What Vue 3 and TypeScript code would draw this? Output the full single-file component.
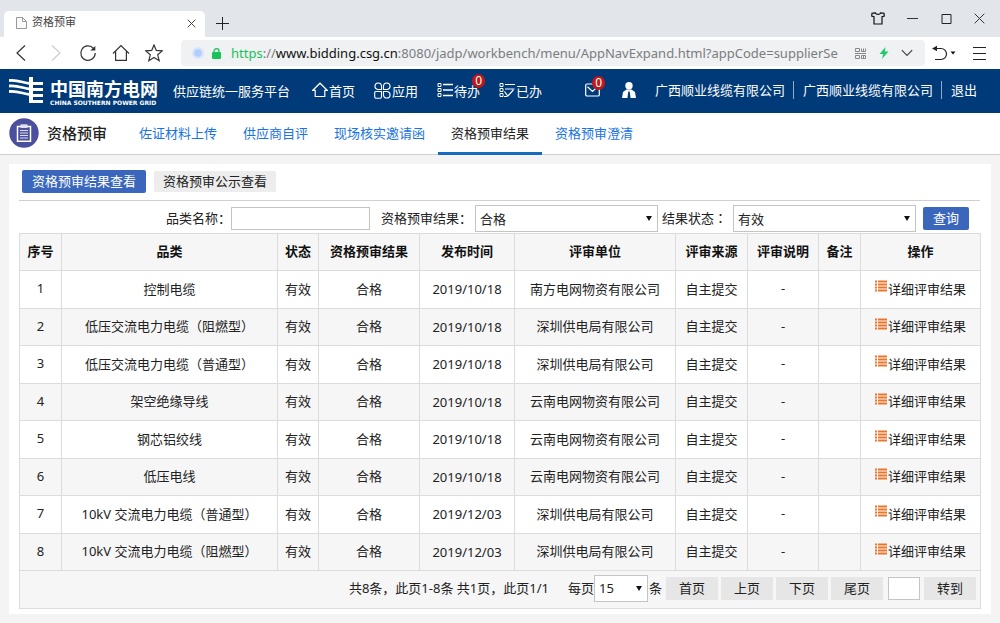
<script setup lang="ts">
import { ref } from 'vue'

interface Row {
  category: string
  date: string
  unit: string
}

const rows: Row[] = [
  { category: '控制电缆', date: '2019/10/18', unit: '南方电网物资有限公司' },
  { category: '低压交流电力电缆（阻燃型）', date: '2019/10/18', unit: '深圳供电局有限公司' },
  { category: '低压交流电力电缆（普通型）', date: '2019/10/18', unit: '深圳供电局有限公司' },
  { category: '架空绝缘导线', date: '2019/10/18', unit: '云南电网物资有限公司' },
  { category: '钢芯铝绞线', date: '2019/10/18', unit: '云南电网物资有限公司' },
  { category: '低压电线', date: '2019/10/18', unit: '云南电网物资有限公司' },
  { category: '10kV 交流电力电缆（普通型）', date: '2019/12/03', unit: '深圳供电局有限公司' },
  { category: '10kV 交流电力电缆（阻燃型）', date: '2019/12/03', unit: '深圳供电局有限公司' },
]

const headers = ['序号', '品类', '状态', '资格预审结果', '发布时间', '评审单位', '评审来源', '评审说明', '备注', '操作']
const tabs = ['佐证材料上传', '供应商自评', '现场核实邀请函', '资格预审结果', '资格预审澄清']
const pagers = ['首页', '上页', '下页', '尾页']

const activeTab = ref('资格预审结果')
const keyword = ref('')
const result = ref('合格')
const state = ref('有效')
const pageSize = ref('15')
const target = ref('')
</script>

<template>
  <div class="page">
    <div class="tabbar">
      <div class="tab">
        <svg width="11" height="12" viewBox="0 0 11 12" fill="#fafafa" stroke="#999"><path d="M.5.5h6l4 4v7H.5zM6.500.5v4h4" /></svg>
        <span class="tab-title">资格预审</span>
        <button class="icon-btn" aria-label="关闭标签">
          <svg width="9" height="9" viewBox="0 0 9 9" fill="none" stroke="#444"><path d="M.7.7l7.600 7.600M8.300.7L.7 8.300" /></svg>
        </button>
      </div>
      <button class="icon-btn plus" aria-label="新建标签">
        <svg width="13" height="13" viewBox="0 0 13 13" fill="none" stroke="#222"><path d="M6.500 0v13M0 6.500h13" /></svg>
      </button>
      <div class="win">
        <button class="icon-btn" aria-label="皮肤">
          <svg width="14" height="13" viewBox="0 0 14 13" fill="none" stroke="#111" stroke-width="1.200"><path d="M4.500.8L1 1.200.7 4l2.300.8V12h8V4.800l2.300-.8-.3-2.800L9.500.8C9 3 5 3 4.500.8z" /></svg>
        </button>
        <button class="icon-btn" aria-label="最小化">
          <svg width="12" height="12" viewBox="0 0 12 12" stroke="#333"><path d="M0 5.500h11" /></svg>
        </button>
        <button class="icon-btn" aria-label="最大化">
          <svg width="11" height="11" viewBox="0 0 11 11" fill="none" stroke="#222"><path d="M1 1.500h9v9H1z" /></svg>
        </button>
        <button class="icon-btn" aria-label="关闭">
          <svg width="11" height="11" viewBox="0 0 11 11" fill="none" stroke="#333"><path d="M.7.7l9.600 9.600M10.300.7L.7 10.300" /></svg>
        </button>
      </div>
    </div>

    <div class="toolbar">
      <div class="tools">
        <button class="icon-btn" aria-label="后退">
          <svg width="18" height="18" viewBox="0 0 18 18" fill="none" stroke="#333" stroke-width="1.200"><path d="M12 1.500L4 9l8 7.500" /></svg>
        </button>
        <button class="icon-btn" aria-label="前进">
          <svg width="18" height="18" viewBox="0 0 18 18" fill="none" stroke="#ccc" stroke-width="1.200"><path d="M6 1.500L14 9l-8 7.500" /></svg>
        </button>
        <button class="icon-btn" aria-label="刷新">
          <svg width="18" height="18" viewBox="0 0 18 18" fill="none" stroke="#333" stroke-width="1.200"><path d="M14.500 4.500A7.200 7.200 0 1 0 16.200 9" /><path d="M16.300 2v4.500h-5z" fill="#333" stroke="none" /></svg>
        </button>
        <button class="icon-btn" aria-label="主页">
          <svg width="18" height="18" viewBox="0 0 18 18" fill="none" stroke="#333" stroke-width="1.200"><path d="M1 9.500L9 1.500l8 8M3.600 7.500v8.800h10.800V7.500" /></svg>
        </button>
        <button class="icon-btn" aria-label="收藏">
          <svg width="18" height="18" viewBox="0 0 18 18" fill="none" stroke="#333" stroke-width="1.200"><path d="M9 1l2.300 5.400 6 .5-4.600 3.900 1.500 5.900L9 13.500l-5.200 3.200 1.500-5.900L.7 6.900l6-.5z" /></svg>
        </button>
      </div>
      <div class="address">
        <svg width="12" height="12" viewBox="0 0 12 12"><circle cx="6" cy="6" r="6" fill="#d8e5fc" /><circle cx="6" cy="6" r="3.800" fill="#b3cefa" /></svg>
        <svg class="lock" width="9" height="11" viewBox="0 0 9 11"><path d="M2 5V3.200a2.500 2.500 0 0 1 5 0V5" fill="none" stroke="#18c35a" stroke-width="1.300" /><rect y="4" width="9" height="7" rx="1" fill="#18c35a" /></svg>
        <div class="url"><span class="secure">https</span>://<span class="host">www.bidding.csg.cn</span>:8080/jadp/workbench/menu/AppNavExpand.html?appCode=supplierSe</div>
        <svg class="qr" width="11" height="11" viewBox="0 0 11 11" fill="none" stroke="#888"><path d="M.5.5h4v3h-4zM6.500.5v3h4v-3M8.500.5v3M0 5.500h11M.5 7.500h4v3h-4zM6.500 7.500h4v3h-4zM8.500 7.500v3" /></svg>
        <svg class="bolt" width="10" height="12" viewBox="0 0 10 12"><path d="M6.500 0L.5 7h3.700L3 12l6.500-7.400H5.800z" fill="#1fcb6b" /></svg>
        <svg width="12" height="8" viewBox="0 0 12 8" fill="none" stroke="#444" stroke-width="1.200"><path d="M.8 1.200L6 6.400l5.200-5.200" /></svg>
      </div>
      <button class="icon-btn undo" aria-label="恢复">
        <svg width="24" height="16" viewBox="0 0 24 16" fill="none" stroke="#222" stroke-width="1.200"><path d="M2 3.500h7a5 5 0 0 1 0 11H3" /><path d="M0 3.500L5 .8v5.400z" fill="#222" stroke="none" /><path d="M18.500 6.500h5L21 9.500z" fill="#111" stroke="none" /></svg>
      </button>
      <button class="icon-btn" aria-label="菜单">
        <svg width="13" height="13" viewBox="0 0 13 13" stroke="#222"><path d="M0 .5h13M0 6.500h13M0 12.500h13" /></svg>
      </button>
    </div>

    <header class="nav">
      <svg class="logo" width="34" height="27" viewBox="0 0 34 27" fill="none" stroke="#fff">
        <path d="M0 3.500c9-1 14 2.500 21 3M0 9c9-1 14 2.500 21 3M0 14.500c9-1 14 2.500 21 3" stroke-width="2.800" />
        <path d="M22 0v25.500" stroke-width="4" />
        <path d="M24 6.500h10M24 12.500h10M24 18.500h10M20 24.500h14" stroke-width="2.800" />
      </svg>
      <div class="brand">
        <strong>中国南方电网</strong>
        <small>CHINA SOUTHERN POWER GRID</small>
      </div>
      <span class="platform">供应链统一服务平台</span>
      <nav class="menu">
        <a href="#">
          <svg width="16" height="16" viewBox="0 0 16 16" fill="none" stroke="#fff" stroke-width="1.200"><path d="M.8 8.300L8 1.200l7.200 7.100H12.800v6.200H3.200V8.300z" /></svg>首页</a>
        <a href="#">
          <svg width="17" height="17" viewBox="0 0 17 17" fill="none" stroke="#fff" stroke-width="1.100"><path d="M7.500 7.500H3.800a3.300 3.300 0 1 1 3.700-3.700zM9.500 7.500V3.800a3.300 3.300 0 1 1 3.700 3.700zM7.500 9.500H1.700a1 1 0 0 0-1 1v4.200a1.600 1.600 0 0 0 1.600 1.600H5.900a1.600 1.600 0 0 0 1.600-1.600zM9.500 9.500h3.700a3.300 3.300 0 1 1-3.700 3.700z" /></svg>应用</a>
        <a href="#">
          <svg width="16" height="16" viewBox="0 0 16 16" fill="none" stroke="#fff"><path d="M1 1.500h3v3H1zM1 6.500h3v3H1zM1 11.500h3v3H1z" /><path d="M6 2.500h10M6 8h10M6 13.500h10" stroke-width="1.300" /></svg>待办<span class="badge">0</span></a>
        <a href="#">
          <svg width="16" height="16" viewBox="0 0 16 16" fill="none" stroke="#fff"><path d="M1 1.500h3v3H1zM1 6.500h3v3H1zM1 11.500h3v3H1z" /><path d="M6 2.500h10M6 7h9.500M5.500 9.500l3.300 4.500 5.500-6M5 14.500h3" stroke-width="1.200" /></svg>已办</a>
      </nav>
      <a class="mail" href="#" aria-label="消息">
        <svg width="15" height="14" viewBox="0 0 15 14" fill="none" stroke="#fff" stroke-width="1.200"><path d="M9 1H2a1.300 1.300 0 0 0-1.300 1.300v9.400A1.300 1.300 0 0 0 2 13h11a1.300 1.300 0 0 0 1.300-1.300V5M2.500 3.800L7.500 8.500l5-4.700" /></svg>
        <span class="badge">0</span>
      </a>
      <svg class="user" width="14" height="16" viewBox="0 0 14 16" fill="#fff"><circle cx="7" cy="3.700" r="3.700" /><path d="M4.500 7.500h5L13 10l1 6H8.600L7.700 9.500H6.300L5.400 16H0l1-6z" /></svg>
      <div class="account">
        <a href="#">广西顺业线缆有限公司</a>
        <a href="#">广西顺业线缆有限公司</a>
        <a href="#">退出</a>
      </div>
    </header>

    <div class="subnav">
      <svg width="30" height="30" viewBox="0 0 30 30"><circle cx="15" cy="15" r="14.700" fill="#4b4f9c" /><path d="M8.500 8.500h13v14.700h-13z" fill="none" stroke="#fff" stroke-width="1.500" /><path d="M11.500 6.300h7V10h-7z" fill="#dfe1f2" /><path d="M11 12.500h8M11 15h8M11 17.500h8M11 20h8" stroke="#dfe1f2" stroke-width="1.200" /></svg>
      <h1>资格预审</h1>
      <nav class="tabs">
        <a v-for="t in tabs" :key="t" href="#" :class="{ active: t === activeTab }" @click.prevent="activeTab = t">{{ t }}</a>
      </nav>
    </div>

    <main class="panel">
      <div class="switches">
        <button class="primary">资格预审结果查看</button>
        <button class="plain">资格预审公示查看</button>
      </div>
      <form class="search" @submit.prevent>
        <label for="keyword">品类名称：</label>
        <input id="keyword" v-model="keyword" type="text" />
        <label for="result" class="result-label">资格预审结果：</label>
        <span class="select"><select id="result" v-model="result"><option>合格</option><option>不合格</option></select></span>
        <label for="state" class="state-label">结果状态：</label>
        <span class="select"><select id="state" v-model="state"><option>有效</option><option>无效</option></select></span>
        <button class="primary" type="submit">查询</button>
      </form>
      <table>
        <colgroup>
          <col class="c-no" /><col class="c-cat" /><col class="c-state" /><col class="c-res" /><col class="c-date" />
          <col class="c-unit" /><col class="c-src" /><col class="c-note" /><col class="c-no" /><col class="c-op" />
        </colgroup>
        <thead>
          <tr><th v-for="h in headers" :key="h" scope="col">{{ h }}</th></tr>
        </thead>
        <tbody>
          <tr v-for="(r, i) in rows" :key="i">
            <td>{{ i + 1 }}</td>
            <td>{{ r.category }}</td>
            <td>有效</td>
            <td>合格</td>
            <td class="date">{{ r.date }}</td>
            <td>{{ r.unit }}</td>
            <td>自主提交</td>
            <td>-</td>
            <td></td>
            <td>
              <a class="detail" href="#"><svg width="12" height="12" viewBox="0 0 12 12" stroke="#e8762c" stroke-width="1.800"><path d="M0 1.500h2M3 1.500h9M0 4.500h2M3 4.500h9M0 7.500h2M3 7.500h9M0 10.500h2M3 10.500h9" /></svg>详细评审结果</a>
            </td>
          </tr>
        </tbody>
        <tfoot>
          <tr>
            <td colspan="10">
              <div class="pager">
                <span class="total">共8条，此页1-8条 共1页，此页1/1</span>
                <label for="size">每页</label>
                <span class="select small"><select id="size" v-model="pageSize"><option>15</option><option>30</option></select></span>
                <span class="unit">条</span>
                <button v-for="p in pagers" :key="p">{{ p }}</button>
                <input v-model="target" type="text" aria-label="页码" />
                <button>转到</button>
              </div>
            </td>
          </tr>
        </tfoot>
      </table>
    </main>
  </div>
</template>

<style>
body {
  margin: 0;
  background: #f4f4f4;
}
</style>

<style scoped>
.page,
.page button,
.page input,
.page select {
  font-family: "Noto Sans", "Noto Sans CJK SC", sans-serif;
  font-size: 13px;
  color: #222;
}
.page * {
  box-sizing: border-box;
}
.page a {
  text-decoration: none;
}
svg {
  flex: none;
}
button {
  border: 0;
  padding: 0;
  white-space: nowrap;
}
.icon-btn {
  display: flex;
  flex: none;
  background: none;
}

.tabbar {
  display: flex;
  align-items: center;
  height: 37px;
  background: #e2e5ea;
}
.tab {
  display: flex;
  align-items: center;
  align-self: flex-end;
  width: 201px;
  height: 26px;
  margin-left: 4px;
  padding: 0 9px 2px 12px;
  border-radius: 5px 5px 0 0;
  background: #fff;
}
.tab-title {
  flex: 1;
  margin-left: 5px;
  font-size: 11px;
  line-height: 14px;
  padding-bottom: 2px;
  color: #444;
}
.plus {
  margin: 9px 0 0 11px;
}
.win {
  display: flex;
  align-items: center;
  gap: 22px;
  margin-left: auto;
  padding-right: 15px;
}

.toolbar {
  display: flex;
  align-items: center;
  height: 32px;
  padding-right: 14px;
  background: #fff;
}
.tools {
  display: flex;
  gap: 15px;
  padding-left: 13px;
}
.address {
  display: flex;
  flex: 1;
  align-items: center;
  min-width: 0;
  height: 26px;
  margin-left: 18px;
  padding: 0 12px 0 11px;
  border-radius: 4px;
  background: #eff1f2;
}
.lock {
  margin-left: 8px;
}
.url {
  flex: 1;
  min-width: 0;
  margin: 0 14px 0 10px;
  overflow: hidden;
  white-space: nowrap;
  font-family: "Noto Sans", sans-serif;
  font-size: 13px;
  line-height: 20px;
  color: #7b7d80;
}
.secure {
  color: #18c35a;
}
.host {
  color: #111;
}
.bolt {
  margin: 0 12px 0 13px;
}
.undo {
  margin: 0 17px 0 7px;
}

.nav {
  display: flex;
  align-items: center;
  height: 44px;
  padding: 0 23px 2px 9px;
  background: #003a78;
  color: #fff;
  white-space: nowrap;
}
.nav a {
  color: #fff;
}
.brand {
  display: flex;
  flex-direction: column;
  width: 107px;
  margin-left: 7px;
  padding-top: 4px;
}
.brand strong {
  font-size: 18px;
  line-height: 20px;
}
.brand small {
  font-family: "DejaVu Sans", sans-serif;
  font-size: 6px;
  font-weight: bold;
  line-height: 7px;
}
.platform {
  margin-left: 16px;
}
.menu {
  display: flex;
  gap: 19px;
  margin-left: 22px;
}
.menu a {
  display: flex;
  align-items: center;
  gap: 1px;
  position: relative;
}
.badge {
  position: absolute;
  top: -7px;
  right: -5px;
  width: 13px;
  height: 14px;
  border-radius: 7px;
  background: #c01818;
  font-size: 12px;
  line-height: 14px;
  text-align: center;
}
.mail {
  display: flex;
  position: relative;
  margin-left: 43px;
}
.user {
  margin-left: 22px;
}
.account {
  display: flex;
  margin-left: auto;
}
.account a {
  line-height: 18px;
}
.account a + a {
  margin-left: 8px;
  padding-left: 9px;
  border-left: 1px solid #8fa9c6;
}

.subnav {
  display: flex;
  align-items: center;
  height: 42px;
  padding: 0 0 2px 9px;
  border-bottom: 1px solid #d0d0d0;
  background: #fff;
  white-space: nowrap;
}
.subnav h1 {
  margin: 0 19px 0 8px;
  font-size: 15px;
  font-weight: 500;
}
.tabs {
  display: flex;
  align-self: stretch;
}
.tabs a {
  padding: 0 13px;
  border-bottom: 3px solid transparent;
  line-height: 40px;
  height: 42px;
  color: #1a73e0;
}
.tabs a.active {
  border-bottom-color: #146bbf;
  color: #222;
}

.panel {
  margin: 9px 9px 0;
  padding: 0 11px 5px 10px;
  background: #fff;
}
.switches {
  display: flex;
  align-items: center;
  gap: 8px;
  height: 37px;
  padding: 0 0 1px 3px;
  border-bottom: 1px solid #d0d0d0;
}
.page .primary {
  height: 23px;
  padding: 0 10px 2px;
  border-radius: 2px;
  background: #3a67bb;
  color: #fff;
}
.plain {
  height: 21px;
  padding: 0 9px 2px;
  border-radius: 2px;
  background: #ededed;
}
.search {
  display: flex;
  align-items: center;
  justify-content: flex-end;
  height: 32px;
  padding: 3px 11px 0 0;
  white-space: nowrap;
}
input {
  height: 23px;
  border: 1px solid #c4c4c4;
  background: #fff;
}
.search input {
  width: 139px;
}
.search label {
  line-height: 26px;
  padding-bottom: 2px;
}
.result-label {
  margin: 0 3px 0 11px;
}
.search .state-label {
  margin: 0 6px 0 4px;
  font-family: "Noto Sans CJK TC", sans-serif;
}
.select {
  position: relative;
  width: 183px;
}
.select::after {
  content: "";
  position: absolute;
  top: 11px;
  right: 6px;
  border: 3px solid transparent;
  border-top: 5px solid #111;
  border-bottom: 0;
  pointer-events: none;
}
select {
  display: block;
  width: 100%;
  height: 27px;
  padding: 0 4px;
  border: 1px solid #c4c4c4;
  border-radius: 0;
  background: #fff;
  appearance: none;
}
.search .primary {
  margin-left: 7px;
}

table {
  width: 100%;
  border-collapse: collapse;
  table-layout: fixed;
}
.c-no { width: 42px; }
.c-cat { width: 216px; }
.c-state { width: 41px; }
.c-res { width: 101px; }
.c-date { width: 95px; }
.c-unit { width: 161px; }
.c-src { width: 72px; }
.c-note { width: 71px; }
.c-op { width: 120px; }
th,
td {
  height: 37px;
  padding: 0 0 3px;
  border: 1px solid #dcdcdc;
  text-align: center;
  white-space: nowrap;
}
td.date {
  padding-bottom: 1px;
}
th {
  color: #111;
}
thead,
tfoot,
tbody tr:nth-child(even) {
  background: #f6f6f6;
}
tbody tr:nth-child(odd) td,
tfoot td {
  height: 38px;
}
.detail {
  display: inline-flex;
  align-items: center;
  color: #222;
}
.detail svg {
  margin: 0 1px 4px 0;
}
.pager {
  display: flex;
  align-items: center;
  justify-content: flex-end;
  gap: 3px;
  padding-right: 4px;
}
.pager span,
.pager label {
  line-height: 20px;
}
.total {
  margin-right: 16px;
}
.pager .small {
  width: 54px;
  margin: 0 -2px 0 -3px;
}
.unit {
  margin-right: 1px;
}
.pager button {
  width: 52px;
  height: 23px;
  padding-bottom: 1px;
  background: #e6e6e6;
}
.pager input {
  width: 32px;
  margin: 0 1px 0 2px;
}
</style>
